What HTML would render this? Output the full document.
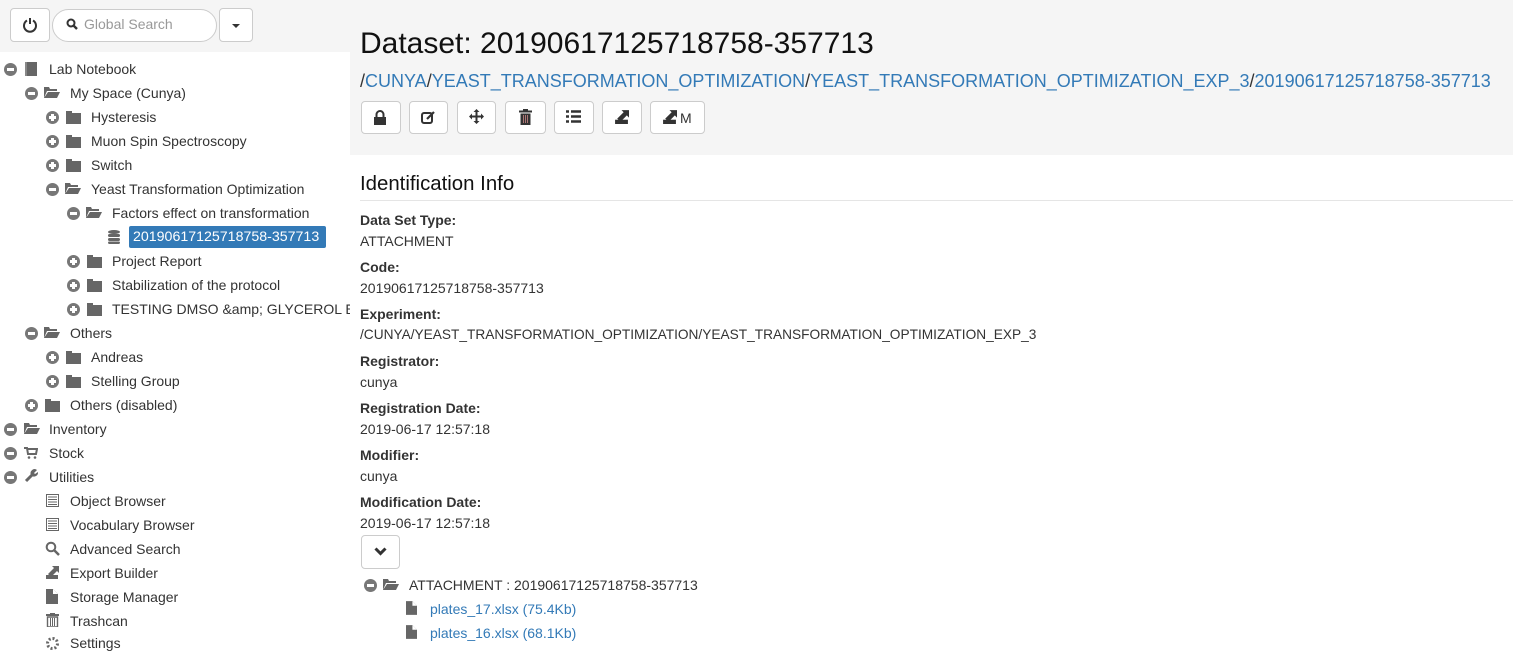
<!DOCTYPE html>
<html><head><meta charset="utf-8"><style>
*{box-sizing:border-box;margin:0;padding:0}
body{width:1513px;height:646px;overflow:hidden;font-family:"Liberation Sans",Arial,sans-serif;font-size:14px;color:#333;background:#fff;position:relative}
.abs{position:absolute}
.row{position:absolute;height:20px;line-height:20px;white-space:nowrap}
.tg{position:absolute;width:13px;height:13px;border-radius:50%;background:#777}
.tg::before{content:"";position:absolute;left:3px;top:5px;width:7px;height:3px;background:#fff}
.tg.p::after{content:"";position:absolute;left:5px;top:3px;width:3px;height:7px;background:#fff}
.fold{position:absolute;width:15px;height:11px;background:#666}
.fold::before{content:"";position:absolute;left:0;top:-2px;width:6px;height:3px;background:#666}
.open{position:absolute;width:16px;height:11px}
.btn{position:absolute;top:101px;height:33px;border:1px solid #ccc;border-radius:4px;background:#fff}
.lbl{position:absolute;left:360px;font-weight:bold;font-size:14px}
.val{position:absolute;left:360px;font-size:14px}
a{color:#337ab7;text-decoration:none}
</style></head><body>
<div class="abs" style="left:0;top:0;width:350px;height:52px;background:#f5f5f5"></div>
<div class="abs" style="left:350px;top:0;width:1163px;height:155px;background:#f5f5f5"></div>
<div class="abs" style="left:10px;top:8px;width:40px;height:34px;border:1px solid #ccc;border-radius:4px;background:#fff"></div>
<svg class="abs" style="left:22px;top:17px" width="16" height="16" viewBox="0 0 16 16"><path d="M5 3.5A6 6 0 1 0 11 3.5" fill="none" stroke="#333" stroke-width="2"/><path d="M8 1v6" stroke="#333" stroke-width="2"/></svg>
<div class="abs" style="left:52px;top:9px;width:165px;height:33px;border:1px solid #ccc;border-radius:17px;background:#fff"></div>
<svg class="abs" style="left:66px;top:18px" width="12" height="12" viewBox="0 0 12 12"><circle cx="5" cy="5" r="3.5" fill="none" stroke="#333" stroke-width="2"/><path d="M7.5 7.5L11 11" stroke="#333" stroke-width="2.4"/></svg>
<div class="abs" style="left:84px;top:16px;color:#999;font-size:14px">Global Search</div>
<div class="abs" style="left:219px;top:8px;width:34px;height:34px;border:1px solid #ccc;border-radius:4px;background:#fff"></div>
<div class="abs" style="left:232px;top:24px;border-left:4px solid transparent;border-right:4px solid transparent;border-top:4px solid #333"></div>

<!-- tree -->
<div class="tg" style="left:4px;top:63px"></div><div class="abs" style="left:25px;top:62px;width:12px;height:14px;background:#666;border-left:2px solid #888"></div><div class="row" style="left:49px;top:59px">Lab Notebook</div>
<div class="tg" style="left:25px;top:87px"></div><svg class="open" style="left:44px;top:87px" viewBox="0 0 16 11"><path d="M0 0h5l1 2h7v2H3L0 11z M4 5h12l-3 6H0z" fill="#666"/></svg><div class="row" style="left:70px;top:83px">My Space (Cunya)</div>
<div class="tg p" style="left:46px;top:111px"></div><div class="fold" style="left:66px;top:113px"></div><div class="row" style="left:91px;top:107px">Hysteresis</div>
<div class="tg p" style="left:46px;top:135px"></div><div class="fold" style="left:66px;top:137px"></div><div class="row" style="left:91px;top:131px">Muon Spin Spectroscopy</div>
<div class="tg p" style="left:46px;top:159px"></div><div class="fold" style="left:66px;top:161px"></div><div class="row" style="left:91px;top:155px">Switch</div>
<div class="tg" style="left:46px;top:183px"></div><svg class="open" style="left:65px;top:183px" viewBox="0 0 16 11"><path d="M0 0h5l1 2h7v2H3L0 11z M4 5h12l-3 6H0z" fill="#666"/></svg><div class="row" style="left:91px;top:179px">Yeast Transformation Optimization</div>
<div class="tg" style="left:67px;top:207px"></div><svg class="open" style="left:86px;top:207px" viewBox="0 0 16 11"><path d="M0 0h5l1 2h7v2H3L0 11z M4 5h12l-3 6H0z" fill="#666"/></svg><div class="row" style="left:112px;top:203px">Factors effect on transformation</div>
<svg class="abs" style="left:108px;top:230px" width="12" height="14" viewBox="0 0 12 14"><ellipse cx="6" cy="2" rx="6" ry="2" fill="#666"/><rect x="0" y="4" width="12" height="3" rx="1.5" fill="#666"/><rect x="0" y="8" width="12" height="3" rx="1.5" fill="#666"/><rect x="0" y="11.5" width="12" height="2.5" rx="1.2" fill="#666"/></svg>
<div class="abs" style="left:129px;top:226px;width:197px;height:22px;background:#337ab7;border-radius:2px"></div><div class="row" style="left:133px;top:227px;color:#fff;font-size:14.2px">20190617125718758-357713</div>
<div class="tg p" style="left:67px;top:255px"></div><div class="fold" style="left:87px;top:257px"></div><div class="row" style="left:112px;top:251px">Project Report</div>
<div class="tg p" style="left:67px;top:279px"></div><div class="fold" style="left:87px;top:281px"></div><div class="row" style="left:112px;top:275px">Stabilization of the protocol</div>
<div class="tg p" style="left:67px;top:303px"></div><div class="fold" style="left:87px;top:305px"></div><div class="abs" style="left:112px;top:299px;width:238px;overflow:hidden;height:20px;line-height:20px;white-space:nowrap">TESTING DMSO &amp;amp; GLYCEROL EFFECT</div>
<div class="tg" style="left:25px;top:327px"></div><svg class="open" style="left:44px;top:327px" viewBox="0 0 16 11"><path d="M0 0h5l1 2h7v2H3L0 11z M4 5h12l-3 6H0z" fill="#666"/></svg><div class="row" style="left:70px;top:323px">Others</div>
<div class="tg p" style="left:46px;top:351px"></div><div class="fold" style="left:66px;top:353px"></div><div class="row" style="left:91px;top:347px">Andreas</div>
<div class="tg p" style="left:46px;top:375px"></div><div class="fold" style="left:66px;top:377px"></div><div class="row" style="left:91px;top:371px">Stelling Group</div>
<div class="tg p" style="left:25px;top:399px"></div><div class="fold" style="left:45px;top:401px"></div><div class="row" style="left:70px;top:395px">Others (disabled)</div>
<div class="tg" style="left:4px;top:423px"></div><svg class="open" style="left:24px;top:423px" viewBox="0 0 16 11"><path d="M0 0h5l1 2h7v2H3L0 11z M4 5h12l-3 6H0z" fill="#666"/></svg><div class="row" style="left:49px;top:419px">Inventory</div>
<div class="tg" style="left:4px;top:447px"></div><svg class="abs" style="left:24px;top:447px" width="14" height="12" viewBox="0 0 14 12"><path d="M0 1h3l1 6h8l1-5H4" fill="none" stroke="#666" stroke-width="2"/><circle cx="5" cy="10.5" r="1.3" fill="#666"/><circle cx="11" cy="10.5" r="1.3" fill="#666"/></svg><div class="row" style="left:49px;top:443px">Stock</div>
<div class="tg" style="left:4px;top:471px"></div><svg class="abs" style="left:24px;top:469px" width="14" height="14" viewBox="0 0 14 14"><path d="M2 12L8 6" stroke="#666" stroke-width="3"/><path d="M7 6A4 4 0 0 1 13 1L10 4l1 1 3-2A4 4 0 0 1 8 7z" fill="#666"/></svg><div class="row" style="left:49px;top:467px">Utilities</div>
<svg class="abs" style="left:46px;top:494px" width="13" height="13" viewBox="0 0 13 13"><rect x="0.5" y="0.5" width="12" height="12" fill="none" stroke="#666"/><path d="M2 3h9M2 5.5h9M2 8h9M2 10.5h9" stroke="#666"/></svg><div class="row" style="left:70px;top:491px">Object Browser</div>
<svg class="abs" style="left:46px;top:518px" width="13" height="13" viewBox="0 0 13 13"><rect x="0.5" y="0.5" width="12" height="12" fill="none" stroke="#666"/><path d="M2 3h9M2 5.5h9M2 8h9M2 10.5h9" stroke="#666"/></svg><div class="row" style="left:70px;top:515px">Vocabulary Browser</div>
<svg class="abs" style="left:45px;top:541px" width="15" height="15" viewBox="0 0 15 15"><circle cx="6" cy="6" r="4.3" fill="none" stroke="#666" stroke-width="2"/><path d="M9 9l5 5" stroke="#666" stroke-width="2.5"/></svg><div class="row" style="left:70px;top:539px">Advanced Search</div>
<svg class="abs" style="left:45px;top:565px" width="14" height="14" viewBox="0 0 14 14"><path d="M1 10h12v4H1z" fill="#666"/><path d="M3 9l6-6-2-2h7v7l-2-2-6 6z" fill="#666"/></svg><div class="row" style="left:70px;top:563px">Export Builder</div>
<svg class="abs" style="left:46px;top:589px" width="12" height="15" viewBox="0 0 12 15"><path d="M0 0h7l5 5v10H0z" fill="#666"/><path d="M7 0v5h5" fill="#fff"/></svg><div class="row" style="left:70px;top:587px">Storage Manager</div>
<svg class="abs" style="left:46px;top:613px" width="13" height="14" viewBox="0 0 13 14"><path d="M0 2h13M4 1h5" stroke="#666" stroke-width="2"/><path d="M1.5 4h10v10h-10z" fill="none" stroke="#666" stroke-width="1.4"/><path d="M4.5 5v8M6.5 5v8M8.5 5v8" stroke="#666"/></svg><div class="row" style="left:70px;top:611px">Trashcan</div>
<svg class="abs" style="left:45px;top:636px" width="15" height="15" viewBox="0 0 15 15"><circle cx="7.5" cy="7.5" r="5" fill="none" stroke="#666" stroke-width="3" stroke-dasharray="2 1.9"/></svg><div class="row" style="left:70px;top:633px">Settings</div>

<!-- right header -->
<div class="abs" style="left:360px;top:26px;font-size:30px;color:#111;line-height:36px;white-space:nowrap">Dataset: 20190617125718758-357713</div>
<div class="abs" style="left:360px;top:70px;font-size:18px;line-height:22px;white-space:nowrap">/<a>CUNYA</a>/<a>YEAST_TRANSFORMATION_OPTIMIZATION</a>/<a>YEAST_TRANSFORMATION_OPTIMIZATION_EXP_3</a>/<a>20190617125718758-357713</a></div>
<div class="btn" style="left:361px;width:40px"></div>
<svg class="abs" style="left:373px;top:110px" width="14" height="15" viewBox="0 0 14 15"><path d="M3.5 7V4.5a3.5 3.5 0 0 1 7 0V7" fill="none" stroke="#333" stroke-width="2"/><rect x="1" y="7" width="12" height="8" fill="#333"/></svg>
<div class="btn" style="left:409px;width:39px"></div>
<svg class="abs" style="left:421px;top:110px" width="15" height="15" viewBox="0 0 15 15"><rect x="1" y="3" width="10" height="10" rx="2" fill="none" stroke="#333" stroke-width="2"/><path d="M6 9l7-7" stroke="#333" stroke-width="2.2"/></svg>
<div class="btn" style="left:457px;width:39px"></div>
<svg class="abs" style="left:469px;top:109px" width="15" height="15" viewBox="0 0 15 15"><path d="M7.5 0l3 3h-2v3.5H12v-2l3 3-3 3v-2H8.5V12h2l-3 3-3-3h2V8.5H3v2l-3-3 3-3v2h3.5V3h-2z" fill="#333"/></svg>
<div class="btn" style="left:505px;width:41px"></div>
<svg class="abs" style="left:519px;top:109px" width="13" height="16" viewBox="0 0 13 16"><path d="M0 2.5h13M4 1h5" stroke="#333" stroke-width="2"/><path d="M1.5 4.5h10V16h-10z" fill="#333"/><path d="M4.5 6v8M6.5 6v8M8.5 6v8" stroke="#c88" stroke-width=".8"/></svg>
<div class="btn" style="left:554px;width:40px"></div>
<svg class="abs" style="left:566px;top:110px" width="15" height="13" viewBox="0 0 15 13"><path d="M0 1.5h3M5 1.5h10M0 6.5h3M5 6.5h10M0 11.5h3M5 11.5h10" stroke="#333" stroke-width="2.6"/></svg>
<div class="btn" style="left:602px;width:40px"></div>
<svg class="abs" style="left:614px;top:109px" width="15" height="15" viewBox="0 0 14 14"><path d="M1 10h12v4H1z" fill="#333"/><path d="M3 9l6-6-2-2h7v7l-2-2-6 6z" fill="#333"/></svg>
<div class="btn" style="left:650px;width:55px"></div>
<svg class="abs" style="left:662px;top:109px" width="15" height="15" viewBox="0 0 14 14"><path d="M1 10h12v4H1z" fill="#333"/><path d="M3 9l6-6-2-2h7v7l-2-2-6 6z" fill="#333"/></svg>
<div class="abs" style="left:680px;top:110px;font-size:14px">M</div>

<div class="abs" style="left:360px;top:173px;font-size:20.4px;color:#111;white-space:nowrap">Identification Info</div>
<div class="abs" style="left:360px;top:200px;width:1153px;height:1px;background:#e5e5e5"></div>
<div class="lbl" style="top:212px">Data Set Type:</div><div class="val" style="top:233px">ATTACHMENT</div>
<div class="lbl" style="top:259px">Code:</div><div class="val" style="top:280px">20190617125718758-357713</div>
<div class="lbl" style="top:306px">Experiment:</div><div class="val" style="top:327px;font-size:13.7px;white-space:nowrap">/CUNYA/YEAST_TRANSFORMATION_OPTIMIZATION/YEAST_TRANSFORMATION_OPTIMIZATION_EXP_3</div>
<div class="lbl" style="top:353px">Registrator:</div><div class="val" style="top:374px">cunya</div>
<div class="lbl" style="top:400px">Registration Date:</div><div class="val" style="top:421px">2019-06-17 12:57:18</div>
<div class="lbl" style="top:447px">Modifier:</div><div class="val" style="top:468px">cunya</div>
<div class="lbl" style="top:494px">Modification Date:</div><div class="val" style="top:515px">2019-06-17 12:57:18</div>
<div class="abs" style="left:361px;top:535px;width:39px;height:34px;border:1px solid #ccc;border-radius:4px"></div>
<svg class="abs" style="left:374px;top:547px" width="13" height="9" viewBox="0 0 13 9"><path d="M1.5 1.5l5 5 5-5" fill="none" stroke="#333" stroke-width="3"/></svg>
<div class="tg" style="left:364px;top:579px"></div><svg class="open" style="left:383px;top:579px" viewBox="0 0 16 11"><path d="M0 0h5l1 2h7v2H3L0 11z M4 5h12l-3 6H0z" fill="#666"/></svg>
<div class="row" style="left:409px;top:575px">ATTACHMENT : 20190617125718758-357713</div>
<svg class="abs" style="left:406px;top:601px" width="11" height="14" viewBox="0 0 12 15"><path d="M0 0h7l5 5v10H0z" fill="#666"/><path d="M7 0v5h5" fill="#fff"/></svg><div class="row" style="left:430px;top:599px"><a>plates_17.xlsx (75.4Kb)</a></div>
<svg class="abs" style="left:406px;top:625px" width="11" height="14" viewBox="0 0 12 15"><path d="M0 0h7l5 5v10H0z" fill="#666"/><path d="M7 0v5h5" fill="#fff"/></svg><div class="row" style="left:430px;top:623px"><a>plates_16.xlsx (68.1Kb)</a></div>
</body></html>
